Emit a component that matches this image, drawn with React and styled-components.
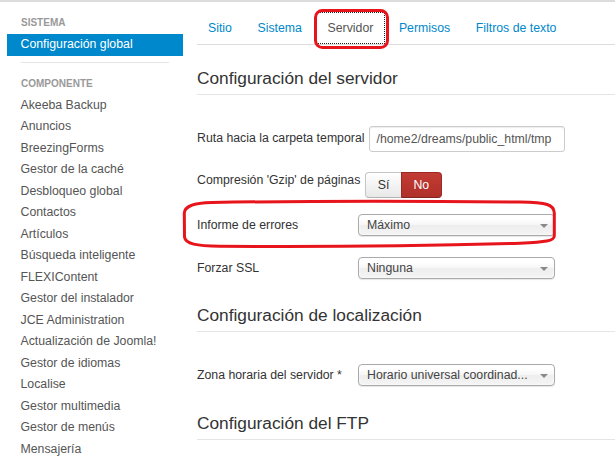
import React from "react";
import styled, { createGlobalStyle } from "styled-components";

const Global = createGlobalStyle`
  html, body { margin: 0; padding: 0; background: #fff; }
  body { font-family: "Liberation Sans", Arial, sans-serif; }
  * { box-sizing: border-box; }
`;

const Page = styled.div`
  position: relative;
  width: 615px;
  height: 463px;
  overflow: hidden;
  border-top: 2px solid #dcdcdc;
  display: flex;
  font-size: 12.3px;
  color: #333;
`;

const Sidebar = styled.nav`
  flex: 0 0 183px;
  padding: 13px 0 0 7px;
`;

const NavHeader = styled.div`
  font-size: 10px;
  font-weight: bold;
  line-height: 16px;
  color: #999;
  text-transform: uppercase;
  padding-left: 14px;
  margin: ${(p) => p.$mt || 0}px 0 3px;
`;

const NavItem = styled.div`
  line-height: 21.5px;
  padding-left: 13.5px;
  font-size: 12.3px;
  color: ${(p) => (p.$active ? "#fff" : "#555")};
  background: ${(p) => (p.$active ? "#0088cc" : "transparent")};
  white-space: nowrap;
`;

const NavDivider = styled.div`
  height: 1px;
  background: #e5e5e5;
  margin: 6.5px 14px 0;
`;

const Main = styled.main`
  flex: 1;
  margin-left: 14px;
  padding-top: 10px;
`;

const TabBar = styled.div`
  display: flex;
  border-bottom: 1px solid #ddd;
`;

const Tab = styled.div`
  line-height: 32px;
  height: 32px;
  padding: 0 12px;
  margin-right: 1.6px;
  font-size: 12.3px;
  color: ${(p) => (p.$active ? "#555" : "#0088cc")};
  outline: ${(p) => (p.$active ? "1px dotted #222" : "none")};
  outline-offset: -1px;
  white-space: nowrap;
  &:first-child {
    padding-left: 11px;
  }
`;

const SectionTitle = styled.h3`
  margin: ${(p) => p.$mt}px 0 ${(p) => p.$mb || 32}px;
  font-size: 17.3px;
  font-weight: normal;
  line-height: 20px;
  padding-bottom: 6px;
  border-bottom: 1px solid #e5e5e5;
  color: #333;
`;

const FormRow = styled.div`
  display: flex;
  align-items: flex-start;
  margin-bottom: ${(p) => p.$gap || 0}px;
`;

const Label = styled.label`
  flex: 0 0 auto;
  min-width: 161px;
  padding-right: 5px;
  line-height: ${(p) => p.$lh || 22}px;
  white-space: nowrap;
  color: #333;
`;

const TextInput = styled.div`
  width: 196px;
  height: 26px;
  line-height: 24px;
  padding: 0 6px;
  border: 1px solid #ccc;
  border-radius: 3px;
  box-shadow: inset 0 1px 1px rgba(0, 0, 0, 0.075);
  color: #555;
  white-space: nowrap;
  overflow: hidden;
`;

const ToggleGroup = styled.div`
  display: flex;
  height: 26px;
`;

const ToggleBtn = styled.div`
  height: 26px;
  line-height: 24px;
  padding: 0 11.5px;
  border: 1px solid ${(p) => (p.$on ? "#9c2a24" : "#c5c5c5")};
  border-bottom-color: ${(p) => (p.$on ? "#802420" : "#b3b3b3")};
  color: ${(p) => (p.$on ? "#fff" : "#333")};
  background: ${(p) =>
    p.$on
      ? "linear-gradient(#c13b33, #b0302a)"
      : "linear-gradient(#ffffff, #e8e8e8)"};
  border-radius: ${(p) => (p.$first ? "4px 0 0 4px" : "0 4px 4px 0")};
  margin-left: ${(p) => (p.$first ? 0 : -1)}px;
`;

const Select = styled.div`
  position: relative;
  width: 197px;
  height: 22px;
  line-height: 20px;
  padding: 0 24px 0 8px;
  border: 1px solid #aaa;
  border-radius: 4px;
  background: linear-gradient(#ffffff 20%, #f6f6f6 50%, #eeeeee 52%, #f4f4f4 100%);
  box-shadow: inset 0 0 3px #fff, 0 1px 1px rgba(0, 0, 0, 0.1);
  color: #444;
  white-space: nowrap;
  overflow: hidden;
`;

const SelectArrow = styled.span`
  position: absolute;
  right: 6px;
  top: 9px;
  width: 0;
  height: 0;
  border-left: 4px solid transparent;
  border-right: 4px solid transparent;
  border-top: 4px solid #888;
`;

const Annotations = styled.svg`
  position: absolute;
  left: 0;
  top: -2px;
  width: 615px;
  height: 463px;
  pointer-events: none;
`;

const components = [
  "Akeeba Backup",
  "Anuncios",
  "BreezingForms",
  "Gestor de la caché",
  "Desbloqueo global",
  "Contactos",
  "Artículos",
  "Búsqueda inteligente",
  "FLEXIContent",
  "Gestor del instalador",
  "JCE Administration",
  "Actualización de Joomla!",
  "Gestor de idiomas",
  "Localise",
  "Gestor multimedia",
  "Gestor de menús",
  "Mensajería",
];

const tabs = ["Sitio", "Sistema", "Servidor", "Permisos", "Filtros de texto"];

function Dropdown({ value }) {
  return (
    <Select>
      {value}
      <SelectArrow />
    </Select>
  );
}

export default function App() {
  return (
    <>
      <Global />
      <Page>
        <Sidebar>
          <NavHeader>Sistema</NavHeader>
          <NavItem $active>Configuración global</NavItem>
          <NavDivider />
          <NavHeader $mt={12.5}>Componente</NavHeader>
          {components.map((c) => (
            <NavItem key={c}>{c}</NavItem>
          ))}
        </Sidebar>
        <Main>
          <TabBar>
            {tabs.map((t) => (
              <Tab key={t} $active={t === "Servidor"}>
                {t}
              </Tab>
            ))}
          </TabBar>
          <SectionTitle $mt={23} $mb={31}>
            Configuración del servidor
          </SectionTitle>
          <FormRow $gap={20}>
            <Label $lh={25}>Ruta hacia la carpeta temporal</Label>
            <TextInput>/home2/dreams/public_html/tmp</TextInput>
          </FormRow>
          <FormRow $gap={16}>
            <Label $lh={16}>Compresión 'Gzip' de páginas</Label>
            <ToggleGroup>
              <ToggleBtn $first>Sí</ToggleBtn>
              <ToggleBtn $on>No</ToggleBtn>
            </ToggleGroup>
          </FormRow>
          <FormRow $gap={21}>
            <Label>Informe de errores</Label>
            <Dropdown value="Máximo" />
          </FormRow>
          <FormRow>
            <Label>Forzar SSL</Label>
            <Dropdown value="Ninguna" />
          </FormRow>
          <SectionTitle $mt={26}>Configuración de localización</SectionTitle>
          <FormRow>
            <Label>Zona horaria del servidor *</Label>
            <Dropdown value="Horario universal coordinad..." />
          </FormRow>
          <SectionTitle $mt={27}>Configuración del FTP</SectionTitle>
        </Main>
        <Annotations viewBox="0 0 615 463">
          <rect
            x="315.5"
            y="10.5"
            width="72"
            height="37"
            rx="7"
            fill="none"
            stroke="#e8141b"
            strokeWidth="3"
          />
          <path
            d="M 212,202.5 C 300,201 420,201 520,202 C 547,202.5 554,204.5 554.3,213 L 554.3,236 C 554,241 546,242 520,243.2 C 420,246 300,246.8 220,246.2 C 196,246 185.5,244 184.5,237 L 184.3,213 C 184.8,206 193,203 212,202.5 Z"
            fill="none"
            stroke="#e8141b"
            strokeWidth="3"
          />
        </Annotations>
      </Page>
    </>
  );
}
